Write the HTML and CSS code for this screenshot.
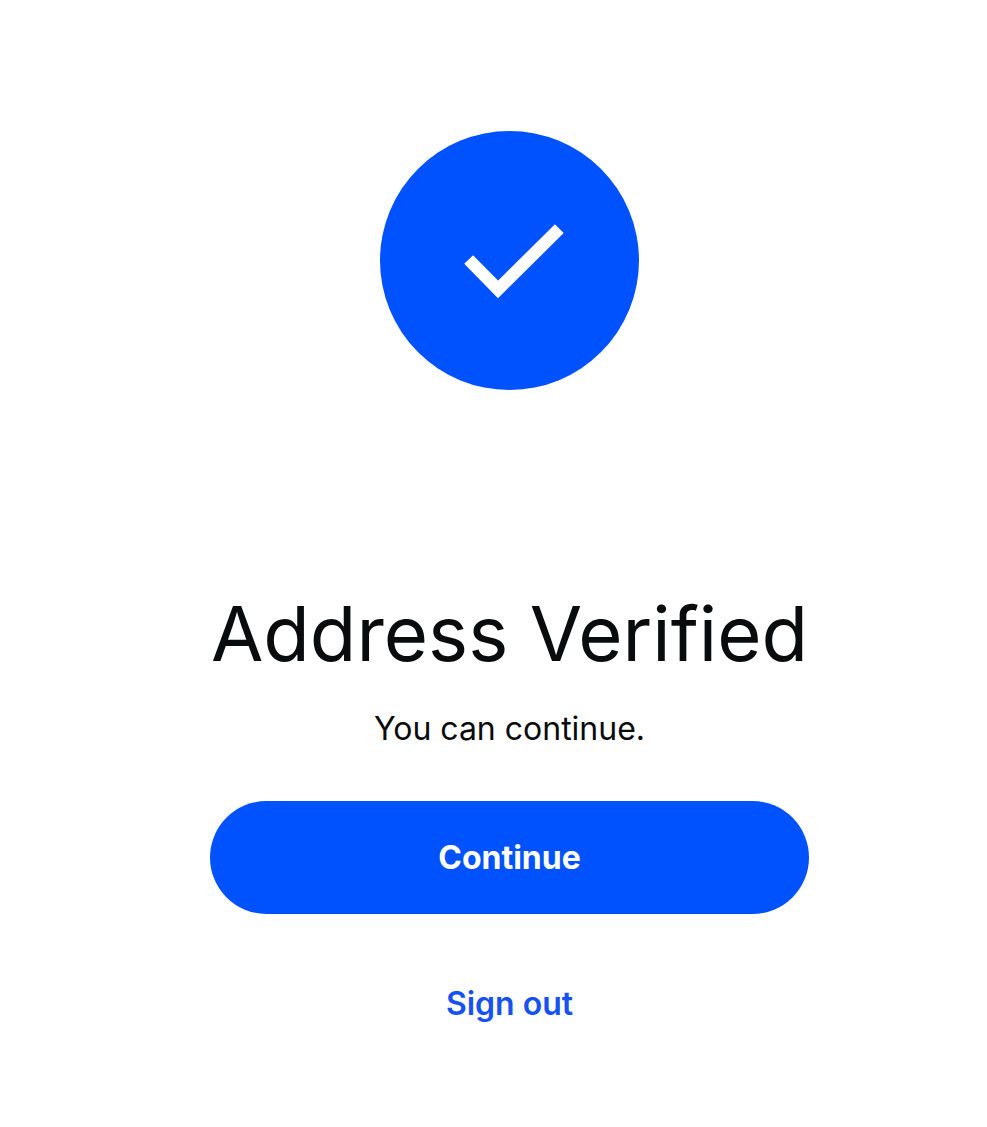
FILE: index.html
```html
<!DOCTYPE html>
<html lang="en">
<head>
    <meta charset="UTF-8">
    <meta name="viewport" content="width=device-width, initial-scale=1.0">
    <title>Address Verified</title>
    <link rel="stylesheet" href="styles.css">
</head>
<body>
    <main class="container">
        <svg class="check" viewBox="0 0 260 260" aria-hidden="true">
            <circle cx="130" cy="130" r="130" fill="#0052ff"/>
            <path d="M89 129L118.500 159L180 98" fill="none" stroke="#fff" stroke-width="12.500"/>
        </svg>
        <h1>Address Verified</h1>
        <p>You can continue.</p>
        <button type="button" class="button">Continue</button>
        <a href="#" class="sign-out">Sign out</a>
    </main>
</body>
</html>
```
FILE: styles.css
```css
body {
    margin: 0;
    background-color: #fff;
    color: #0a0b0d;
    font-family: Inter, "Liberation Sans", sans-serif;
}
.container {
    display: flex;
    flex-direction: column;
    align-items: center;
    max-width: 599px;
    margin: 0 auto;
    padding: 131px 0 100px 32px;
}
.check {
    width: 259px;
    height: 259px;
}
h1 {
    margin: 195px 0 0;
    font-size: 76px;
    line-height: 96px;
    font-weight: 400;
    white-space: nowrap;
}
p {
    margin: 24px 0 48px;
    font-size: 32px;
    line-height: 48px;
}
.button {
    width: 100%;
    height: 113px;
    border: none;
    border-radius: 57px;
    background-color: #0052ff;
    color: #fff;
    font-family: inherit;
    font-size: 32px;
    font-weight: 700;
    cursor: pointer;
}
.sign-out {
    margin-top: 66px;
    color: #1652f0;
    font-size: 32px;
    line-height: 48px;
    font-weight: 600;
    text-decoration: none;
}
```
